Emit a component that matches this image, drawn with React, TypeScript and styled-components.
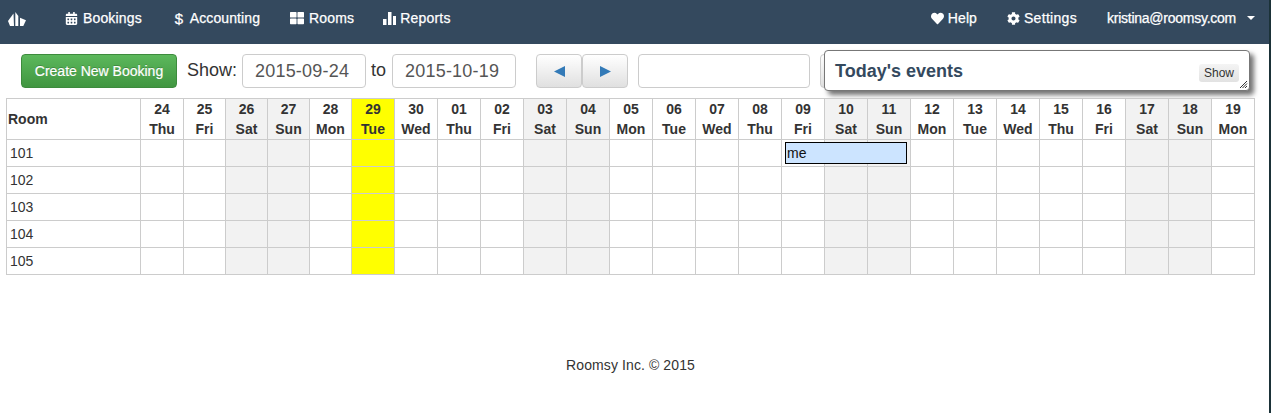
import React from "react";
import styled, { createGlobalStyle } from "styled-components";
import { FaCalendarAlt, FaCog, FaHeart, FaThLarge } from "react-icons/fa";

const days = [
  ["24", "Thu"], ["25", "Fri"], ["26", "Sat"], ["27", "Sun"], ["28", "Mon"], ["29", "Tue"],
  ["30", "Wed"], ["01", "Thu"], ["02", "Fri"], ["03", "Sat"], ["04", "Sun"], ["05", "Mon"],
  ["06", "Tue"], ["07", "Wed"], ["08", "Thu"], ["09", "Fri"], ["10", "Sat"], ["11", "Sun"],
  ["12", "Mon"], ["13", "Tue"], ["14", "Wed"], ["15", "Thu"], ["16", "Fri"], ["17", "Sat"],
  ["18", "Sun"], ["19", "Mon"],
];
const rooms = ["101", "102", "103", "104", "105"];

const GlobalStyle = createGlobalStyle`
  html, body {
    margin: 0;
    background: #fff;
    font-family: "Liberation Sans", Arial, sans-serif;
    color: #333;
  }
`;

const Page = styled.div`
  width: 1271px;
  height: 413px;
  display: flex;
  flex-direction: column;
  overflow: hidden;
  box-sizing: border-box;
  border-right: 2px solid #1b3238;
`;

const Navbar = styled.nav`
  height: 44px;
  flex: none;
  background: #34495e;
  display: flex;
  align-items: center;
  justify-content: space-between;
  padding: 0 14px 8px 8px;
  box-sizing: border-box;
  color: #fff;
`;

const NavGroup = styled.div`
  display: flex;
  align-items: center;
`;

const Logo = styled.svg`
  width: 18px;
  height: 14px;
  margin-right: 39px;
  margin-top: 1px;
`;

const NavItem = styled.a<{ $gap?: number; $after?: number; $track?: number }>`
  display: flex;
  align-items: center;
  gap: ${(p) => p.$gap ?? 4}px;
  margin-right: ${(p) => p.$after ?? 0}px;
  font-size: 14px;
  -webkit-text-stroke: 0.25px #fff;
  color: #fff;
  letter-spacing: ${(p) => p.$track ?? 0.1}px;
  white-space: nowrap;
  svg {
    flex: none;
  }
`;

const Dollar = styled.span`
  width: 8px;
  font-size: 15px;
`;

const Caret = styled.span`
  width: 0;
  height: 0;
  margin-left: 11px;
  border-left: 4px solid transparent;
  border-right: 4px solid transparent;
  border-top: 4px solid #fff;
`;

const Toolbar = styled.div`
  height: 54px;
  flex: none;
  display: flex;
  align-items: flex-start;
  padding: 10px 0 0 21px;
  box-sizing: border-box;
  position: relative;
`;

const PrimaryButton = styled.button`
  width: 156px;
  height: 34px;
  border: 1px solid #3d8b3d;
  border-radius: 4px;
  background: linear-gradient(#5cb85c, #419641);
  color: #fff;
  font: 14px "Liberation Sans", Arial, sans-serif;
  -webkit-text-stroke: 0.2px #fff;
  text-shadow: 0 -1px 0 rgba(0, 0, 0, 0.2);
  padding: 0;
  margin-right: 10px;
`;

const Label = styled.span`
  font-size: 18px;
  line-height: 32px;
  color: #333;
`;

const ToLabel = styled(Label)`
  margin-right: 1px;
`;

const DateInput = styled.div`
  width: 124px;
  height: 34px;
  border: 1px solid #ccc;
  border-radius: 4px;
  box-sizing: border-box;
  margin: 0 5px;
  padding-left: 12px;
  font-size: 18px;
  line-height: 33px;
  color: #555;
  letter-spacing: 0.2px;
`;

const PagerGroup = styled.div`
  display: flex;
  margin-left: 15px;
  margin-right: 10px;
`;

const PagerButton = styled.button`
  width: 46px;
  height: 34px;
  padding: 0;
  border: 1px solid #ccc;
  border-radius: 4px;
  background: linear-gradient(#fff, #e0e0e0);
  display: flex;
  align-items: center;
  justify-content: center;
`;

const SearchInput = styled.div`
  width: 172px;
  height: 34px;
  border: 1px solid #ccc;
  border-radius: 4px;
  box-sizing: border-box;
  margin-right: 10px;
`;

const HiddenEdge = styled.div`
  width: 40px;
  height: 34px;
  border: 1px solid #ccc;
  border-radius: 4px;
  box-sizing: border-box;
  background: linear-gradient(#fff, #e0e0e0);
`;

const EventsPanel = styled.div`
  position: absolute;
  left: 824px;
  top: 6px;
  width: 426px;
  height: 41px;
  box-sizing: border-box;
  background: #fff;
  border: 1px solid #777;
  border-radius: 4px;
  box-shadow: 4px 4px 5px rgba(0, 0, 0, 0.55);
  display: flex;
  align-items: center;
  justify-content: space-between;
  padding: 0 10px;
`;

const EventsTitle = styled.h4`
  margin: 1px 0 0;
  font-size: 18px;
  font-weight: 700;
  color: #34495e;
`;

const ShowButton = styled.span`
  width: 40px;
  height: 18px;
  margin-top: 4px;
  background: linear-gradient(#f4f4f4, #e2e2e2);
  border-radius: 3px;
  font-size: 12px;
  line-height: 18px;
  text-align: center;
  color: #333;
`;

const ResizeHandle = styled.svg`
  position: absolute;
  right: 1px;
  bottom: 1px;
  width: 9px;
  height: 9px;
`;

const Scheduler = styled.div`
  margin-left: 6px;
  width: 1249px;
  position: relative;
`;

const Grid = styled.table`
  border-collapse: collapse;
  table-layout: fixed;
  width: 1249px;
`;

const DayCol = styled.col<{ $narrow: boolean }>`
  width: ${(p) => (p.$narrow ? 42 : 43)}px;
`;

const HeadCell = styled.th<{ $tone?: string }>`
  border: 1px solid #ccc;
  height: 40px;
  padding: 0;
  font-size: 14px;
  line-height: 20px;
  font-weight: 700;
  color: #333;
  text-align: center;
  background: ${(p) => p.$tone ?? "#fff"};
`;

const RoomHead = styled.th`
  border: 1px solid #ccc;
  padding: 0 0 0 1px;
  text-align: left;
  font-size: 14px;
  font-weight: 700;
  color: #333;
  background: #fff;
`;

const RoomCell = styled.td`
  border: 1px solid #ccc;
  height: 27px;
  padding: 0 0 1px 3px;
  box-sizing: border-box;
  font-size: 14px;
  color: #333;
`;

const DayCell = styled.td<{ $tone?: string }>`
  border: 1px solid #ccc;
  padding: 0;
  background: ${(p) => p.$tone ?? "#fff"};
`;

const Booking = styled.div`
  position: absolute;
  left: 779px;
  top: 44px;
  width: 122px;
  height: 22px;
  box-sizing: border-box;
  border: 1px solid #000;
  background: #cce4ff;
  color: #111;
  font-size: 14px;
  line-height: 21px;
  padding-left: 1px;
`;

const Footer = styled.footer`
  margin-top: 82px;
  padding-right: 8px;
  text-align: center;
  font-size: 14px;
  letter-spacing: 0.1px;
  color: #333;
`;

function toneFor(name: string, index: number) {
  if (index === 5) return "#ffff00";
  if (name === "Sat" || name === "Sun") return "#f2f2f2";
  return undefined;
}

export default function App() {
  return (
    <Page>
      <GlobalStyle />
      <Navbar>
        <NavGroup>
          <Logo viewBox="0 0 18 14">
            <path d="M0 9 L5.5 1.5 L6 14 L2 14 Z" fill="#fff" />
            <path d="M7.3 0 L10.3 4 L10.3 14 L7.3 14 Z" fill="#fff" />
            <path d="M12 5.7 L18 8.3 L15.3 14 L12 14 Z" fill="#fff" />
          </Logo>
          <NavItem $gap={5} $after={33} $track={0.15}>
            <FaCalendarAlt size={13} />
            Bookings
          </NavItem>
          <NavItem $gap={7} $after={30}>
            <Dollar>$</Dollar>
            Accounting
          </NavItem>
          <NavItem $gap={5} $after={29} $track={0.15}>
            <FaThLarge size={14} />
            Rooms
          </NavItem>
          <NavItem $track={0.2}>
            <svg width="13" height="14" viewBox="0 0 13 14">
              <path d="M0 8 H3.5 V14 H0 Z M5 1 H8.5 V14 H5 Z M10 5 H13 V14 H10 Z" fill="#fff" />
            </svg>
            Reports
          </NavItem>
        </NavGroup>
        <NavGroup>
          <NavItem $after={30}>
            <FaHeart size={13} />
            Help
          </NavItem>
          <NavItem $after={30} $track={0.3}>
            <FaCog size={13} />
            Settings
          </NavItem>
          <NavItem $gap={0} $track={-0.25}>
            kristina@roomsy.com
            <Caret />
          </NavItem>
        </NavGroup>
      </Navbar>
      <Toolbar>
        <PrimaryButton>Create New Booking</PrimaryButton>
        <Label>Show:</Label>
        <DateInput>2015-09-24</DateInput>
        <ToLabel>to</ToLabel>
        <DateInput>2015-10-19</DateInput>
        <PagerGroup>
          <PagerButton>
            <svg width="11" height="11" viewBox="0 0 11 11">
              <path d="M0 5.5 L11 0 L11 11 Z" fill="#337ab7" />
            </svg>
          </PagerButton>
          <PagerButton>
            <svg width="11" height="11" viewBox="0 0 11 11">
              <path d="M11 5.5 L0 0 L0 11 Z" fill="#337ab7" />
            </svg>
          </PagerButton>
        </PagerGroup>
        <SearchInput />
        <HiddenEdge />
        <EventsPanel>
          <EventsTitle>Today's events</EventsTitle>
          <ShowButton>Show</ShowButton>
          <ResizeHandle viewBox="0 0 9 9">
            <path d="M8 1 L1 8 M8 3.5 L3.5 8 M8 6 L6 8" stroke="#333" strokeWidth="1" />
          </ResizeHandle>
        </EventsPanel>
      </Toolbar>
      <Scheduler>
        <Grid>
          <colgroup>
            <col />
            {days.map(([num], i) => (
              <DayCol key={num + i} $narrow={i >= 1 && i <= 4} />
            ))}
          </colgroup>
          <thead>
            <tr>
              <RoomHead>Room</RoomHead>
              {days.map(([num, name], i) => (
                <HeadCell key={i} $tone={toneFor(name, i)}>
                  {num}
                  <br />
                  {name}
                </HeadCell>
              ))}
            </tr>
          </thead>
          <tbody>
            {rooms.map((room) => (
              <tr key={room}>
                <RoomCell>{room}</RoomCell>
                {days.map(([, name], i) => (
                  <DayCell key={i} $tone={toneFor(name, i)} />
                ))}
              </tr>
            ))}
          </tbody>
        </Grid>
        <Booking>me</Booking>
      </Scheduler>
      <Footer>Roomsy Inc. © 2015</Footer>
    </Page>
  );
}
